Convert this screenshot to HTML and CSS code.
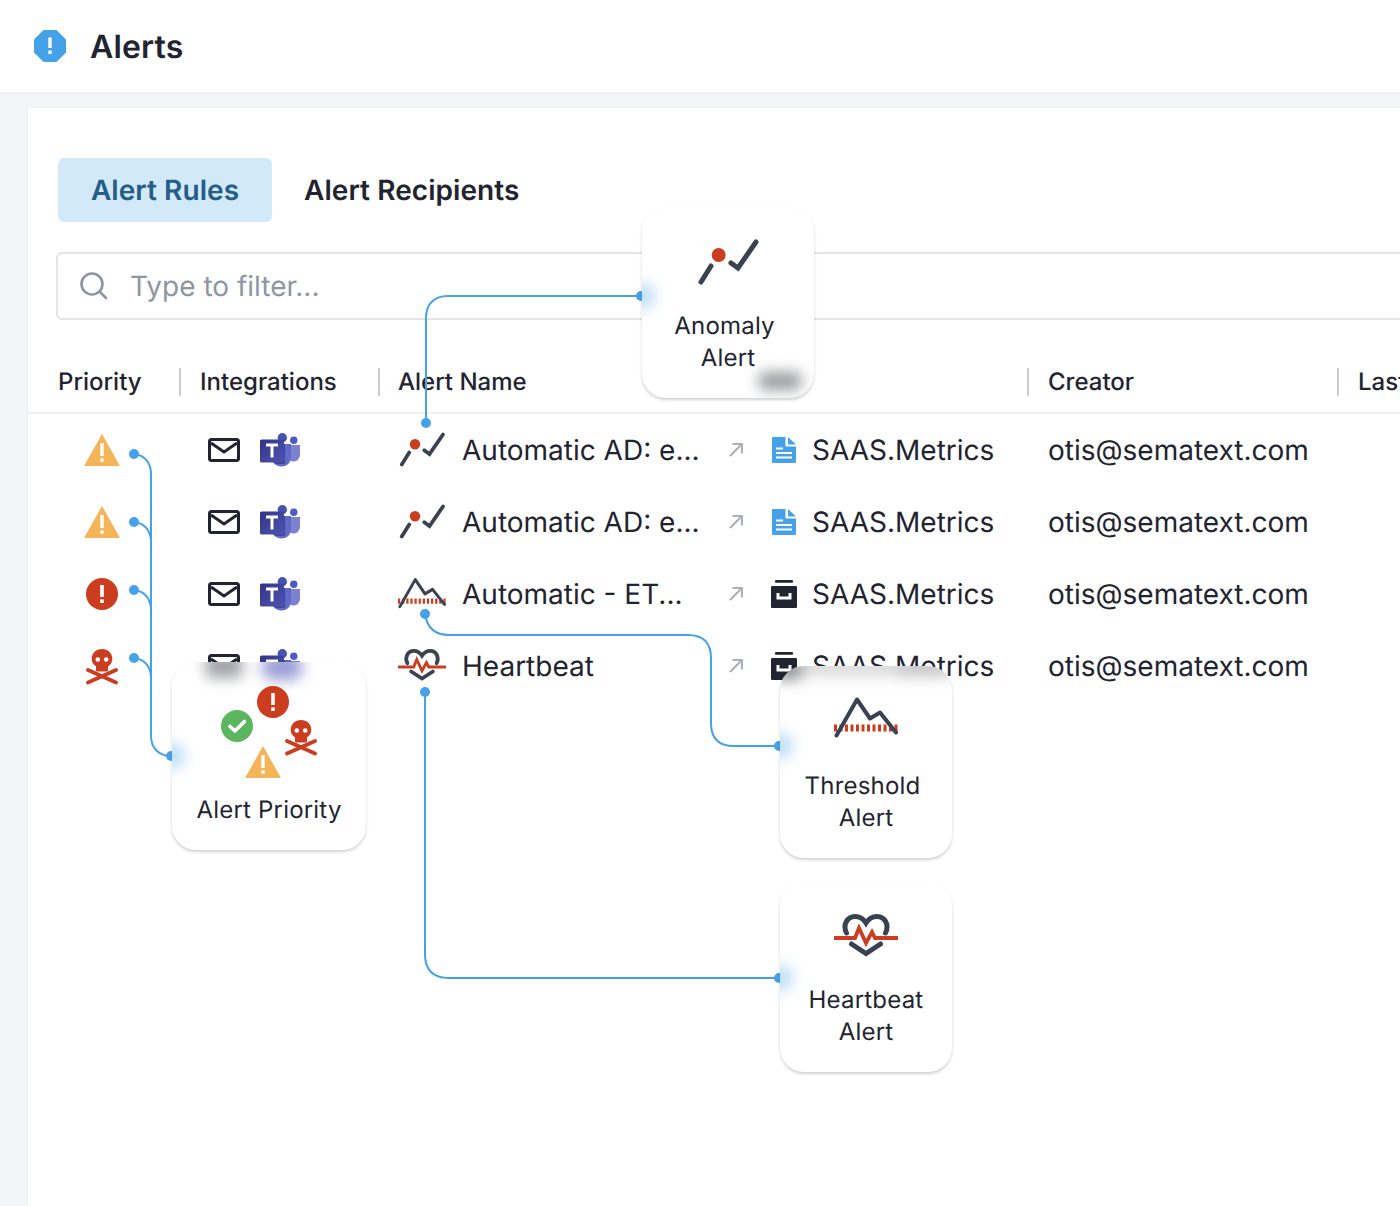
FILE: index.html
```html
<!DOCTYPE html>
<html lang="en">
<head>
<meta charset="utf-8">
<title>Alerts</title>
<link rel="stylesheet" href="styles.css">
</head>
<body>
<svg class="defs" width="0" height="0" aria-hidden="true">
  <symbol id="i-warn" viewBox="0 0 36 32">
    <path d="M18 0 36 32H0Z" fill="#f5b458"/>
    <path d="M18 9v13" stroke="#fff" stroke-width="3.4"/>
    <rect x="16.3" y="24.4" width="3.4" height="3.4" fill="#fff"/>
  </symbol>
  <symbol id="i-error" viewBox="0 0 32 32">
    <circle cx="16" cy="16" r="16" fill="#cc3d1f"/>
    <path d="M16 7v12" stroke="#fff" stroke-width="3.6"/>
    <rect x="14.2" y="21.4" width="3.6" height="3.6" fill="#fff"/>
  </symbol>
  <symbol id="i-ok" viewBox="0 0 32 32">
    <circle cx="16" cy="16" r="16" fill="#5cb660"/>
    <path d="m9 16.500 5 4.500 9.500-9.500" fill="none" stroke="#fff" stroke-width="3.600" stroke-linecap="round" stroke-linejoin="round"/>
  </symbol>
  <symbol id="i-skull" viewBox="0 0 32 36">
    <path d="M16 0c5.800 0 10.300 4 10.300 9.700 0 3.400-1.700 6-4.300 7.500V21c0 1-.7 1.600-1.600 1.600h-8.800c-.9 0-1.600-.6-1.600-1.600v-3.800C7.400 15.700 5.700 13.100 5.700 9.700 5.700 4 10.200 0 16 0Z" fill="#cc3d1f"/>
    <circle cx="11.800" cy="10.500" r="2.300" fill="#fff"/>
    <circle cx="20.200" cy="10.500" r="2.300" fill="#fff"/>
    <path d="M2 33.500 30 21M2 21l28 12.500" stroke="#cc3d1f" stroke-width="3.800" stroke-linecap="round"/>
  </symbol>
  <symbol id="i-mail" viewBox="0 0 32 24">
    <rect x="1.500" y="1.500" width="29" height="21" rx="2" fill="none" stroke="#1f2430" stroke-width="3"/>
    <path d="m3 5 13 9 13-9" fill="none" stroke="#1f2430" stroke-width="3"/>
  </symbol>
  <symbol id="i-teams" viewBox="0 0 40 34">
    <defs>
      <linearGradient id="tg" x1="0" y1="0" x2="1" y2="1"><stop offset="0" stop-color="#2f3488"/><stop offset="1" stop-color="#4f55ae"/></linearGradient>
    </defs>
    <circle cx="33.800" cy="7.300" r="3.700" fill="#5059c9"/>
    <path d="M28 12h12v9.500c0 4-3 7-6 7-3.500 0-6-2-6-5Z" fill="#7b83d0"/>
    <circle cx="22.300" cy="4.700" r="4.700" fill="#4850b4"/>
    <path d="M12 11h19v13c0 5.500-4 9.500-9.500 9.500S12 30 12 24Z" fill="#6169c8"/>
    <path d="M12 24V11h13v18a2 2 0 0 1-2 2h-7c-2.500-1.500-4-4-4-7Z" fill="#3f4497"/>
    <rect x="0" y="6.500" width="24" height="23" rx="1.600" fill="url(#tg)"/>
    <path d="M6 12h12M12 12v12.500" stroke="#fff" stroke-width="3"/>
  </symbol>
  <symbol id="i-anomaly" viewBox="0 0 64 64">
    <path d="M5 50 15 34M35 31l7 5L60 10" fill="none" stroke="#3a4150" stroke-width="5" stroke-linecap="round" stroke-linejoin="miter"/>
    <circle cx="22.700" cy="23" r="7" fill="#cc3d1f"/>
  </symbol>
  <symbol id="i-threshold" viewBox="0 0 64 64">
    <path d="M0 40h64" stroke="#cc3d1f" stroke-width="7" stroke-dasharray="3 2.500"/>
    <path d="m2.500 47.500 20.500-36 13 19 10-6 16 20" fill="none" stroke="#3a4150" stroke-width="4" stroke-linecap="round" stroke-linejoin="round"/>
  </symbol>
  <symbol id="i-heart" viewBox="0 0 64 64">
    <path d="M12.500 27C8.500 19 13 10.500 21 10.500c5 0 8.500 2.500 11 6.500 2.500-4 6-6.500 11-6.500 8 0 12.500 8.500 8.500 16.500M17.500 38 32 47.500 46.500 38" fill="none" stroke="#3a4150" stroke-width="5" stroke-linecap="round"/>
    <path d="M0 32h21l4-10 7 15 6-11 3 6h23" fill="none" stroke="#cc3d1f" stroke-width="3.800"/>
  </symbol>
  <symbol id="i-arrow" viewBox="0 0 14 14">
    <path d="M1 13 13 1M3.500 1H13v9.500" fill="none" stroke="#aeb0bb" stroke-width="2.200"/>
  </symbol>
  <symbol id="i-doc" viewBox="0 0 24 26">
    <path d="M1 0h12.500v8.500a1 1 0 0 0 1 1H24V25a1 1 0 0 1-1 1H1a1 1 0 0 1-1-1V1a1 1 0 0 1 1-1Z" fill="#45a1e8"/>
    <path d="M16 0 24 7.500h-8Z" fill="#45a1e8"/>
    <path d="M4 11.500h7M4 16h16M4 20.500h16" stroke="#fff" stroke-width="2"/>
  </symbol>
  <symbol id="i-archive" viewBox="0 0 26 28">
    <rect x="4" y="0" width="18" height="2.800" rx="1" fill="#1f2430"/>
    <path d="M1 6h24a1 1 0 0 1 1 1v20a1 1 0 0 1-1 1H1a1 1 0 0 1-1-1V7a1 1 0 0 1 1-1Z" fill="#1f2430"/>
    <path d="M7 13v5h12v-5" fill="none" stroke="#fff" stroke-width="3"/>
  </symbol>
</svg>

<header class="topbar">
  <svg class="topbar-icon" viewBox="0 0 32 32" aria-hidden="true">
    <path d="M9.500 0h13L32 9.500v13L22.500 32h-13L0 22.500v-13Z" fill="#45a1e8"/>
    <path d="M16 7.500v10.500" stroke="#fff" stroke-width="3.400"/>
    <rect x="14.300" y="20.500" width="3.400" height="3.400" fill="#fff"/>
  </svg>
  <h1 class="topbar-title">Alerts</h1>
</header>

<main class="main">
  <section class="panel">
    <nav class="tabs">
      <a class="tab tab-active">Alert Rules</a>
      <a class="tab">Alert Recipients</a>
    </nav>
    <div class="search">
      <svg class="search-icon" viewBox="0 0 28 28" aria-hidden="true">
        <circle cx="12" cy="12" r="10.500" fill="none" stroke="#8f96a3" stroke-width="2.600"/>
        <path d="m20 20 6 6" stroke="#8f96a3" stroke-width="2.600" stroke-linecap="round"/>
      </svg>
      <span class="search-text">Type to filter...</span>
    </div>

    <div class="thead">
      <div class="th sep">Priority</div>
      <div class="th sep">Integrations</div>
      <div class="th th-name">Alert Name</div>
      <div class="th sep"></div>
      <div class="th sep">Creator</div>
      <div class="th">Last Triggered</div>
    </div>

    <div class="row">
      <div class="cell-priority"><svg class="ic-warn"><use href="#i-warn"/></svg></div>
      <div class="cell-int"><svg class="ic-mail"><use href="#i-mail"/></svg><svg class="ic-teams"><use href="#i-teams"/></svg></div>
      <div class="cell-name"><svg class="ic-type"><use href="#i-anomaly"/></svg><span>Automatic AD: e...</span></div>
      <div class="cell-source"><svg class="ic-arrow"><use href="#i-arrow"/></svg><span class="src-box"><svg class="ic-doc"><use href="#i-doc"/></svg></span><span>SAAS.Metrics</span></div>
      <div class="cell-creator">otis@sematext.com</div>
    </div>
    <div class="row">
      <div class="cell-priority"><svg class="ic-warn"><use href="#i-warn"/></svg></div>
      <div class="cell-int"><svg class="ic-mail"><use href="#i-mail"/></svg><svg class="ic-teams"><use href="#i-teams"/></svg></div>
      <div class="cell-name"><svg class="ic-type"><use href="#i-anomaly"/></svg><span>Automatic AD: e...</span></div>
      <div class="cell-source"><svg class="ic-arrow"><use href="#i-arrow"/></svg><span class="src-box"><svg class="ic-doc"><use href="#i-doc"/></svg></span><span>SAAS.Metrics</span></div>
      <div class="cell-creator">otis@sematext.com</div>
    </div>
    <div class="row">
      <div class="cell-priority"><svg class="ic-circle"><use href="#i-error"/></svg></div>
      <div class="cell-int"><svg class="ic-mail"><use href="#i-mail"/></svg><svg class="ic-teams"><use href="#i-teams"/></svg></div>
      <div class="cell-name"><svg class="ic-type"><use href="#i-threshold"/></svg><span>Automatic - ET...</span></div>
      <div class="cell-source"><svg class="ic-arrow"><use href="#i-arrow"/></svg><span class="src-box"><svg class="ic-archive"><use href="#i-archive"/></svg></span><span>SAAS.Metrics</span></div>
      <div class="cell-creator">otis@sematext.com</div>
    </div>
    <div class="row">
      <div class="cell-priority"><svg class="ic-skull"><use href="#i-skull"/></svg></div>
      <div class="cell-int"><svg class="ic-mail"><use href="#i-mail"/></svg><svg class="ic-teams"><use href="#i-teams"/></svg></div>
      <div class="cell-name"><svg class="ic-type"><use href="#i-heart"/></svg><span>Heartbeat</span></div>
      <div class="cell-source"><svg class="ic-arrow"><use href="#i-arrow"/></svg><span class="src-box"><svg class="ic-archive"><use href="#i-archive"/></svg></span><span>SAAS.Metrics</span></div>
      <div class="cell-creator">otis@sematext.com</div>
    </div>
  </section>
</main>

<div class="annotations">
  <svg class="connectors" viewBox="0 0 1400 1206" aria-hidden="true">
    <g fill="none" stroke="#45a1e8" stroke-width="2">
      <path d="M134 454c10 1 17 8 17 20V736c0 12 8 20 20 20"/>
      <path d="M134 522c10 1 17 8 17 20"/>
      <path d="M134 590c10 1 17 8 17 20"/>
      <path d="M134 658c10 1 17 8 17 20"/>
      <path d="M426 423V318c0-14 8-22 22-22H640"/>
      <path d="M425 614c2 13 10 21 24 21H688c15 0 23 8 23 23v65c0 15 8 23 23 23H778"/>
      <path d="M425 692V954c0 16 8 24 24 24H778"/>
    </g>
    <g fill="#45a1e8">
      <circle cx="134" cy="454" r="5"/>
      <circle cx="134" cy="522" r="5"/>
      <circle cx="134" cy="590" r="5"/>
      <circle cx="134" cy="658" r="5"/>
      <circle cx="426" cy="423" r="5"/>
      <circle cx="425" cy="614" r="5"/>
      <circle cx="425" cy="692" r="5"/>
      <circle cx="641" cy="296" r="5"/>
      <circle cx="171" cy="756" r="5"/>
      <circle cx="779" cy="746" r="5"/>
      <circle cx="779" cy="978" r="5"/>
    </g>
  </svg>

  <div class="card card-anomaly">
    <span class="blob blob-glow glow-anomaly"></span>
    <span class="blob blob-type"></span>
    <svg class="card-icon"><use href="#i-anomaly"/></svg>
    <div class="card-label">Anomaly&nbsp;<br>Alert</div>
  </div>

  <div class="card card-priority">
    <span class="blob blob-glow glow-priority"></span>
    <span class="blob blob-mail"></span>
    <span class="blob blob-teams"></span>
    <div class="cluster">
      <svg class="cl-error"><use href="#i-error"/></svg>
      <svg class="cl-ok"><use href="#i-ok"/></svg>
      <svg class="cl-skull"><use href="#i-skull"/></svg>
      <svg class="cl-warn"><use href="#i-warn"/></svg>
    </div>
    <div class="card-label">Alert Priority</div>
  </div>

  <div class="card card-threshold">
    <span class="blob blob-glow glow-threshold"></span>
    <span class="blob blob-archive"></span>
    <span class="blob blob-source"></span>
    <span class="blob blob-source-end"></span>
    <svg class="card-icon"><use href="#i-threshold"/></svg>
    <div class="card-label">Threshold&nbsp;<br>Alert</div>
  </div>

  <div class="card card-heartbeat">
    <span class="blob blob-glow glow-heartbeat"></span>
    <svg class="card-icon"><use href="#i-heart"/></svg>
    <div class="card-label">Heartbeat<br>Alert</div>
  </div>
</div>
</body>
</html>
```
FILE: styles.css
```css
* { box-sizing: border-box; }
html, body { margin: 0; padding: 0; }
body {
  position: relative;
  width: 1400px;
  height: 1206px;
  overflow: hidden;
  background: #f3f5f7;
  color: #1f2430;
  font-family: Inter, "Liberation Sans", sans-serif;
  text-rendering: geometricPrecision;
}
.defs { position: absolute; }
svg { display: block; flex: none; }

.topbar {
  display: flex;
  align-items: center;
  height: 94px;
  padding-left: 34px;
  background: #fff;
  border-bottom: 2px solid #eceef1;
}
.topbar-icon { width: 32px; height: 32px; }
.topbar-title { margin: 2px 0 0 24px; font-size: 32px; font-weight: 600; line-height: 40px; letter-spacing: 0.15px; }

.main { padding: 13px 0 0 27px; }
.panel {
  width: 1500px;
  height: 1100px;
  padding-top: 50px;
  background: #fff;
  border: 1px solid #eceef1;
  border-radius: 4px 0 0 0;
}
.tabs { display: flex; margin-left: 30px; }
.tab {
  display: flex;
  align-items: center;
  height: 64px;
  padding: 0 33px 0 32px;
  font-size: 28px;
  font-weight: 600;
  letter-spacing: 0.06px;
  color: #1f2430;
  border-radius: 6px;
}
.tab-active { justify-content: center; width: 214px; padding: 0; background: #d1e9f9; color: #255d87; }

.search {
  display: flex;
  align-items: center;
  height: 68px;
  margin: 30px 0 0 28px;
  padding-left: 22px;
  border: 2px solid #e3e4e8;
  border-radius: 6px;
}
.search-icon { width: 28px; height: 28px; }
.search-text { margin-left: 22px; font-size: 28px; color: #8f96a3; }

.thead, .row {
  display: grid;
  grid-template-columns: 153px 199px 350px 299px 310px 200px;
}
.thead {
  align-items: center;
  height: 63px;
  margin: 31px 0 1px;
  border-bottom: 2px solid #eef0f2;
}
.th {
  display: flex;
  align-items: center;
  height: 28px;
  padding-left: 19px;
  font-size: 24px;
  font-weight: 500;
  white-space: nowrap;
}
.th:first-child { padding-left: 30px; }
.th-name { padding-left: 18px; }
.sep { border-right: 2px solid #c9cbd2; }

.row { align-items: center; height: 72px; padding-bottom: 2px; font-size: 28px; white-space: nowrap; }
.cell-priority { display: flex; justify-content: center; width: 147px; padding-left: 1px; }
.cell-int { display: flex; align-items: center; gap: 20px; padding-left: 27px; }
.cell-name { display: flex; align-items: center; gap: 16px; padding-left: 18px; }
.cell-source { display: flex; align-items: center; }
.cell-creator { padding-left: 19px; }

.ic-warn { width: 36px; height: 32px; }
.ic-circle { width: 32px; height: 32px; }
.ic-skull { width: 32px; height: 36px; margin-top: 2px; }
.ic-mail { width: 32px; height: 24px; }
.ic-teams { width: 40px; height: 34px; }
.ic-type { width: 48px; height: 48px; margin-top: 2px; }
.ic-arrow { width: 14px; height: 14px; margin: 0 0 1px -1px; }
.src-box { display: flex; justify-content: center; width: 28px; margin: 0 14px 0 27px; }
.ic-doc { width: 24px; height: 26px; }
.ic-archive { width: 26px; height: 28px; }

.annotations { position: absolute; left: 0; top: 0; width: 1400px; height: 1206px; }
.connectors { position: absolute; left: 0; top: 0; width: 1400px; height: 1206px; }

.card {
  position: absolute;
  display: flex;
  flex-direction: column;
  align-items: center;
  overflow: hidden;
  background: #fff;
  border-radius: 24px;
  box-shadow: 0 2px 3px rgba(40, 44, 60, 0.22);
}
.card > svg, .card > div { position: relative; z-index: 1; }
.card-icon { width: 64px; height: 64px; }
.card-label { font-size: 24px; line-height: 32px; letter-spacing: 0.2px; text-align: center; white-space: nowrap; }

.card-anomaly { left: 642px; top: 208px; width: 172px; height: 190px; padding-top: 24px; }
.card-anomaly .card-label { margin-top: 14px; }
.card-priority { left: 172px; top: 662px; width: 194px; height: 188px; padding-top: 18px; }
.card-threshold { left: 780px; top: 666px; width: 172px; height: 192px; padding-top: 22px; }
.card-threshold .card-label { margin-top: 18px; }
.card-heartbeat { left: 780px; top: 882px; width: 172px; height: 190px; padding-top: 24px; }
.card-heartbeat .card-label { margin-top: 14px; }

/* What shows through the frosted cards */
.blob { position: absolute; display: block; border-radius: 50%; filter: blur(7px); }
.blob-glow { left: -13px; width: 26px; height: 26px; background: rgba(69, 161, 232, 0.35); }
.glow-anomaly { top: 75px; }
.glow-priority { top: 81px; }
.glow-threshold { top: 67px; }
.glow-heartbeat { top: 83px; }
.blob-type { left: 116px; top: 164px; width: 44px; height: 18px; border-radius: 8px; background: rgba(70, 72, 80, 0.55); }
.blob-mail { left: 33px; top: -8px; width: 38px; height: 24px; border-radius: 8px; background: rgba(70, 72, 80, 0.5); }
.blob-teams { left: 90px; top: -8px; width: 40px; height: 26px; border-radius: 10px; background: rgba(72, 80, 180, 0.55); }
.blob-archive { left: -8px; top: -8px; width: 30px; height: 22px; border-radius: 6px; background: rgba(40, 44, 52, 0.5); }
.blob-source { left: 20px; top: -8px; width: 160px; height: 18px; border-radius: 6px; background: rgba(70, 72, 80, 0.2); }
.blob-source-end { left: 118px; top: -8px; width: 48px; height: 18px; border-radius: 6px; background: rgba(70, 72, 80, 0.14); }

.cluster { flex: none; width: 96px; height: 98px; margin-bottom: 16px; }
.cluster svg { position: absolute; }
.cl-error { left: 36px; top: 6px; width: 32px; height: 32px; }
.cl-ok { left: 0; top: 30px; width: 32px; height: 32px; }
.cl-skull { left: 64px; top: 40px; width: 32px; height: 36px; }
.cl-warn { left: 24px; top: 66px; width: 36px; height: 32px; }
```
